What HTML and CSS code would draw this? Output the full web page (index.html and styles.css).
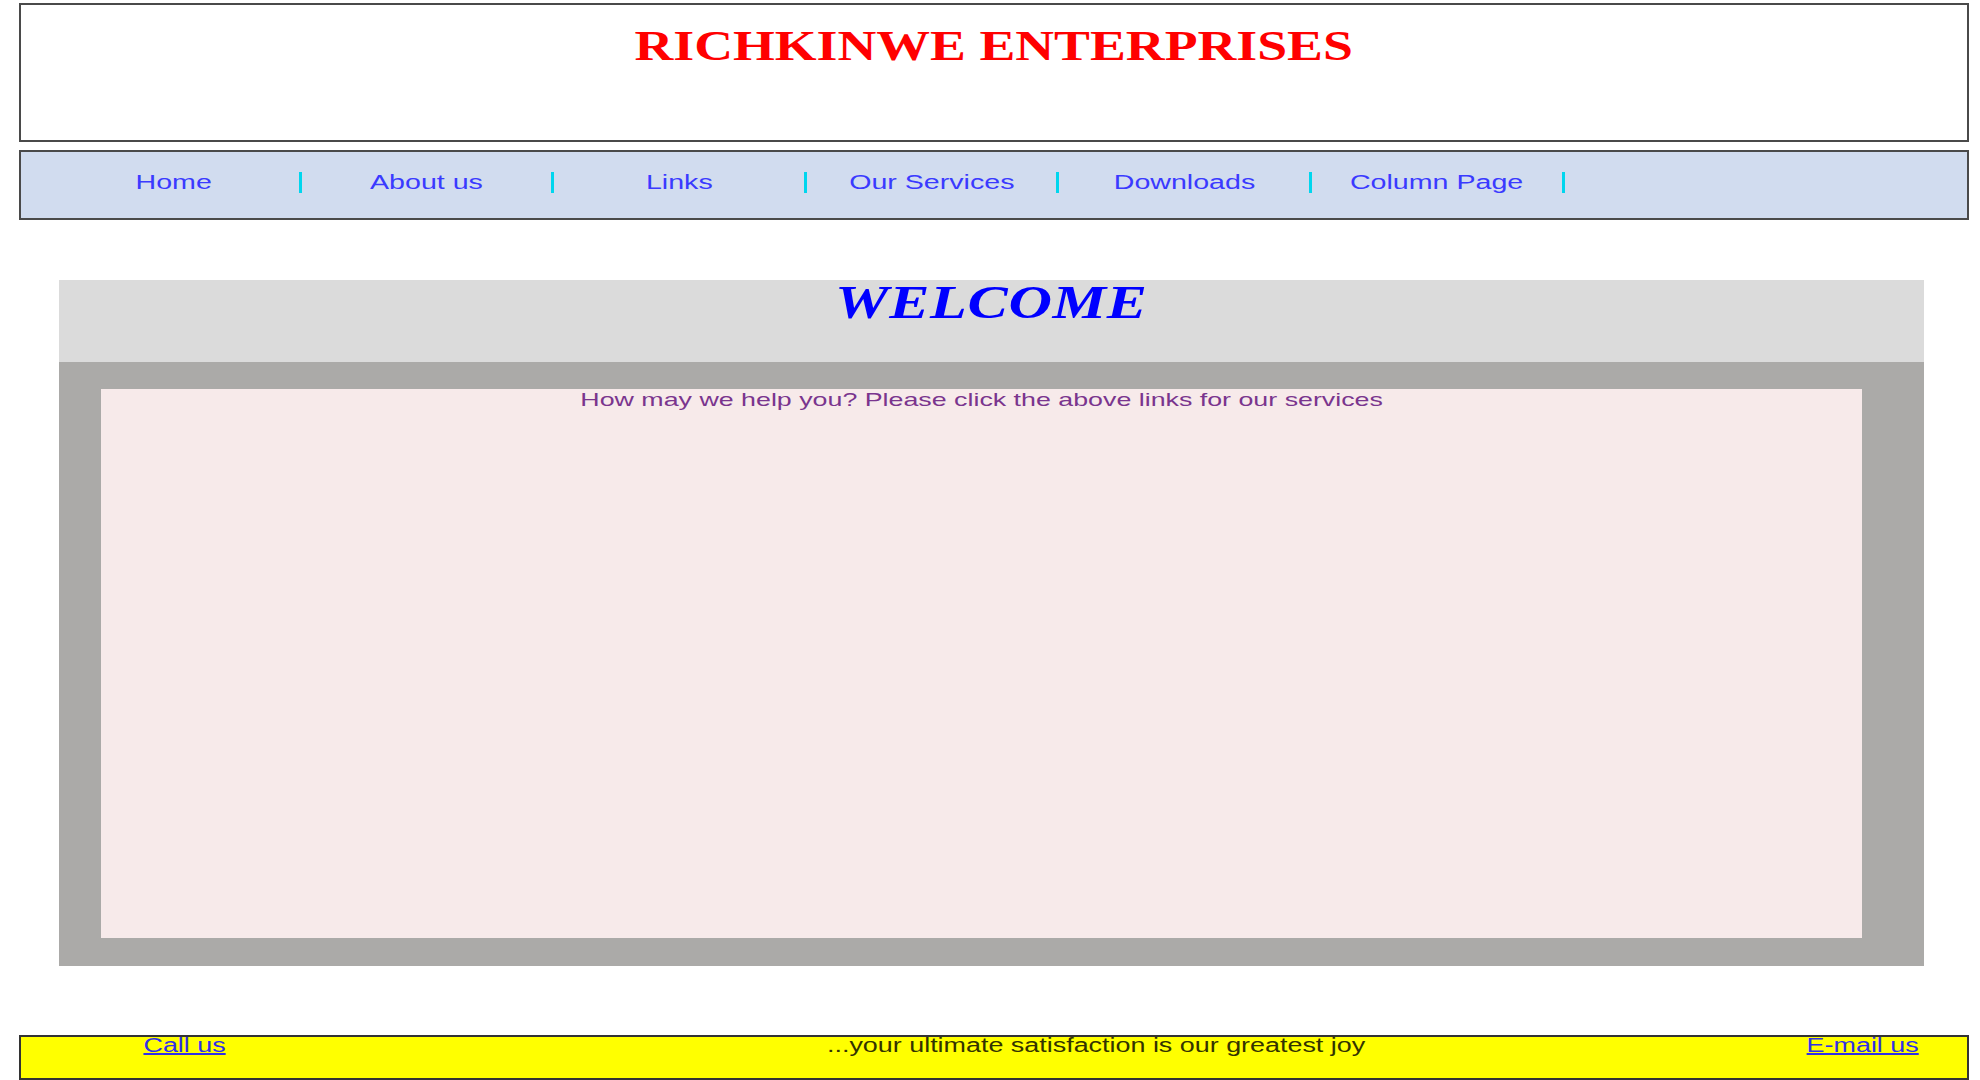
FILE: index.html
```html
<!DOCTYPE html>
<html lang="en">
<head>
<meta charset="utf-8">
<title>Richkinwe Enterprises</title>
<link rel="stylesheet" href="styles.css">
</head>
<body>
<div class="page">
  <header class="masthead">
    <h1 class="brand"><span class="stretch brand-text">RICHKINWE ENTERPRISES</span></h1>
  </header>
  <nav class="menu">
    <ul class="menu-list">
      <li class="menu-item"><a class="menu-link" href="#"><span class="stretch menu-text">Home</span></a></li>
      <li class="menu-item"><a class="menu-link" href="#"><span class="stretch menu-text">About us</span></a></li>
      <li class="menu-item"><a class="menu-link" href="#"><span class="stretch menu-text">Links</span></a></li>
      <li class="menu-item"><a class="menu-link" href="#"><span class="stretch menu-text">Our Services</span></a></li>
      <li class="menu-item"><a class="menu-link" href="#"><span class="stretch menu-text">Downloads</span></a></li>
      <li class="menu-item"><a class="menu-link" href="#"><span class="stretch menu-text">Column Page</span></a></li>
    </ul>
  </nav>
  <main class="welcome">
    <div class="welcome-head">
      <h2 class="welcome-title"><span class="stretch welcome-text">WELCOME</span></h2>
    </div>
    <div class="welcome-body">
      <div class="panel">
        <p class="panel-text"><span class="stretch body-text">How may we help you? Please click the above links for our services</span></p>
      </div>
    </div>
  </main>
  <footer class="footbar">
    <div class="foot-left"><a class="foot-link" href="#"><span class="stretch foot-text foot-underline">Call us</span></a></div>
    <div class="foot-mid"><span class="stretch foot-text">...your ultimate satisfaction is our greatest joy</span></div>
    <div class="foot-right"><a class="foot-link" href="#"><span class="stretch foot-text foot-underline">E-mail us</span></a></div>
  </footer>
</div>
</body>
</html>
```
FILE: styles.css
```css
html, body {
  margin: 0;
  padding: 0;
  background: #ffffff;
  overflow: hidden;
}

body {
  font-family: "Liberation Sans", Arial, sans-serif;
}

.stretch {
  display: inline-block;
  transform-origin: center center;
  white-space: nowrap;
}

.brand-text { transform: scaleX(1.28); }
.menu-text { transform: scaleX(1.43); }
.welcome-text { transform: scaleX(1.31); }
.body-text { transform: scaleX(1.41); }
.foot-text { transform: scaleX(1.345); }

.page {
  padding: 3px 11px 0 19px;
}

/* Masthead */
.masthead {
  box-sizing: border-box;
  height: 139px;
  border: 2px solid #4a4a4a;
  background: #ffffff;
  text-align: center;
}

.brand {
  margin: 0;
  padding-top: 20px;
  font-family: "Liberation Serif", "Times New Roman", serif;
  font-weight: bold;
  font-size: 42px;
  line-height: 42px;
  color: #ff0000;
}

/* Menu */
.menu {
  box-sizing: border-box;
  margin-top: 8px;
  height: 70px;
  border: 2px solid #4a4a4a;
  background: #d1dcef;
}

.menu-list {
  list-style: none;
  margin: 0;
  padding: 0 0 5px 28px;
  height: 100%;
  box-sizing: border-box;
  display: flex;
  align-items: center;
}

.menu-item {
  width: 252.6px;
  display: flex;
  align-items: center;
}

.menu-item::after {
  content: "";
  width: 3px;
  height: 21px;
  background: #00d6ee;
}

.menu-link {
  flex: 1;
  text-align: center;
  font-size: 20px;
  color: #3a3aff;
  text-decoration: none;
}

/* Welcome block */
.welcome {
  display: block;
  margin: 60px 45px 0 40px;
}

.welcome-head {
  box-sizing: border-box;
  height: 82px;
  background: #dbdbdb;
  text-align: center;
}

.welcome-title {
  margin: 0;
  padding-top: 0;
  font-family: "Liberation Serif", "Times New Roman", serif;
  font-style: italic;
  font-weight: bold;
  font-size: 46px;
  line-height: 46px;
  letter-spacing: 0.5px;
  color: #0000ff;
}

.welcome-body {
  background: #abaaa8;
  padding: 27px 62px 28px 42px;
}

.panel {
  height: 549px;
  background: #f7eaea;
  text-align: center;
}

.panel-text {
  margin: 0;
  font-size: 19px;
  line-height: 21px;
  color: #7a358e;
}

/* Footer */
.footbar {
  box-sizing: border-box;
  margin-top: 69px;
  height: 45px;
  border: 2px solid #333333;
  background: #ffff00;
  display: grid;
  grid-template-columns: 328px 1fr 208px;
  font-size: 20px;
  line-height: 16px;
  color: #333300;
}

.foot-left,
.foot-right {
  text-align: center;
}

.foot-mid {
  text-align: center;
  padding-left: 84px;
}

.foot-link {
  color: #3030e8;
}

.foot-underline {
  text-decoration: underline;
}
```
